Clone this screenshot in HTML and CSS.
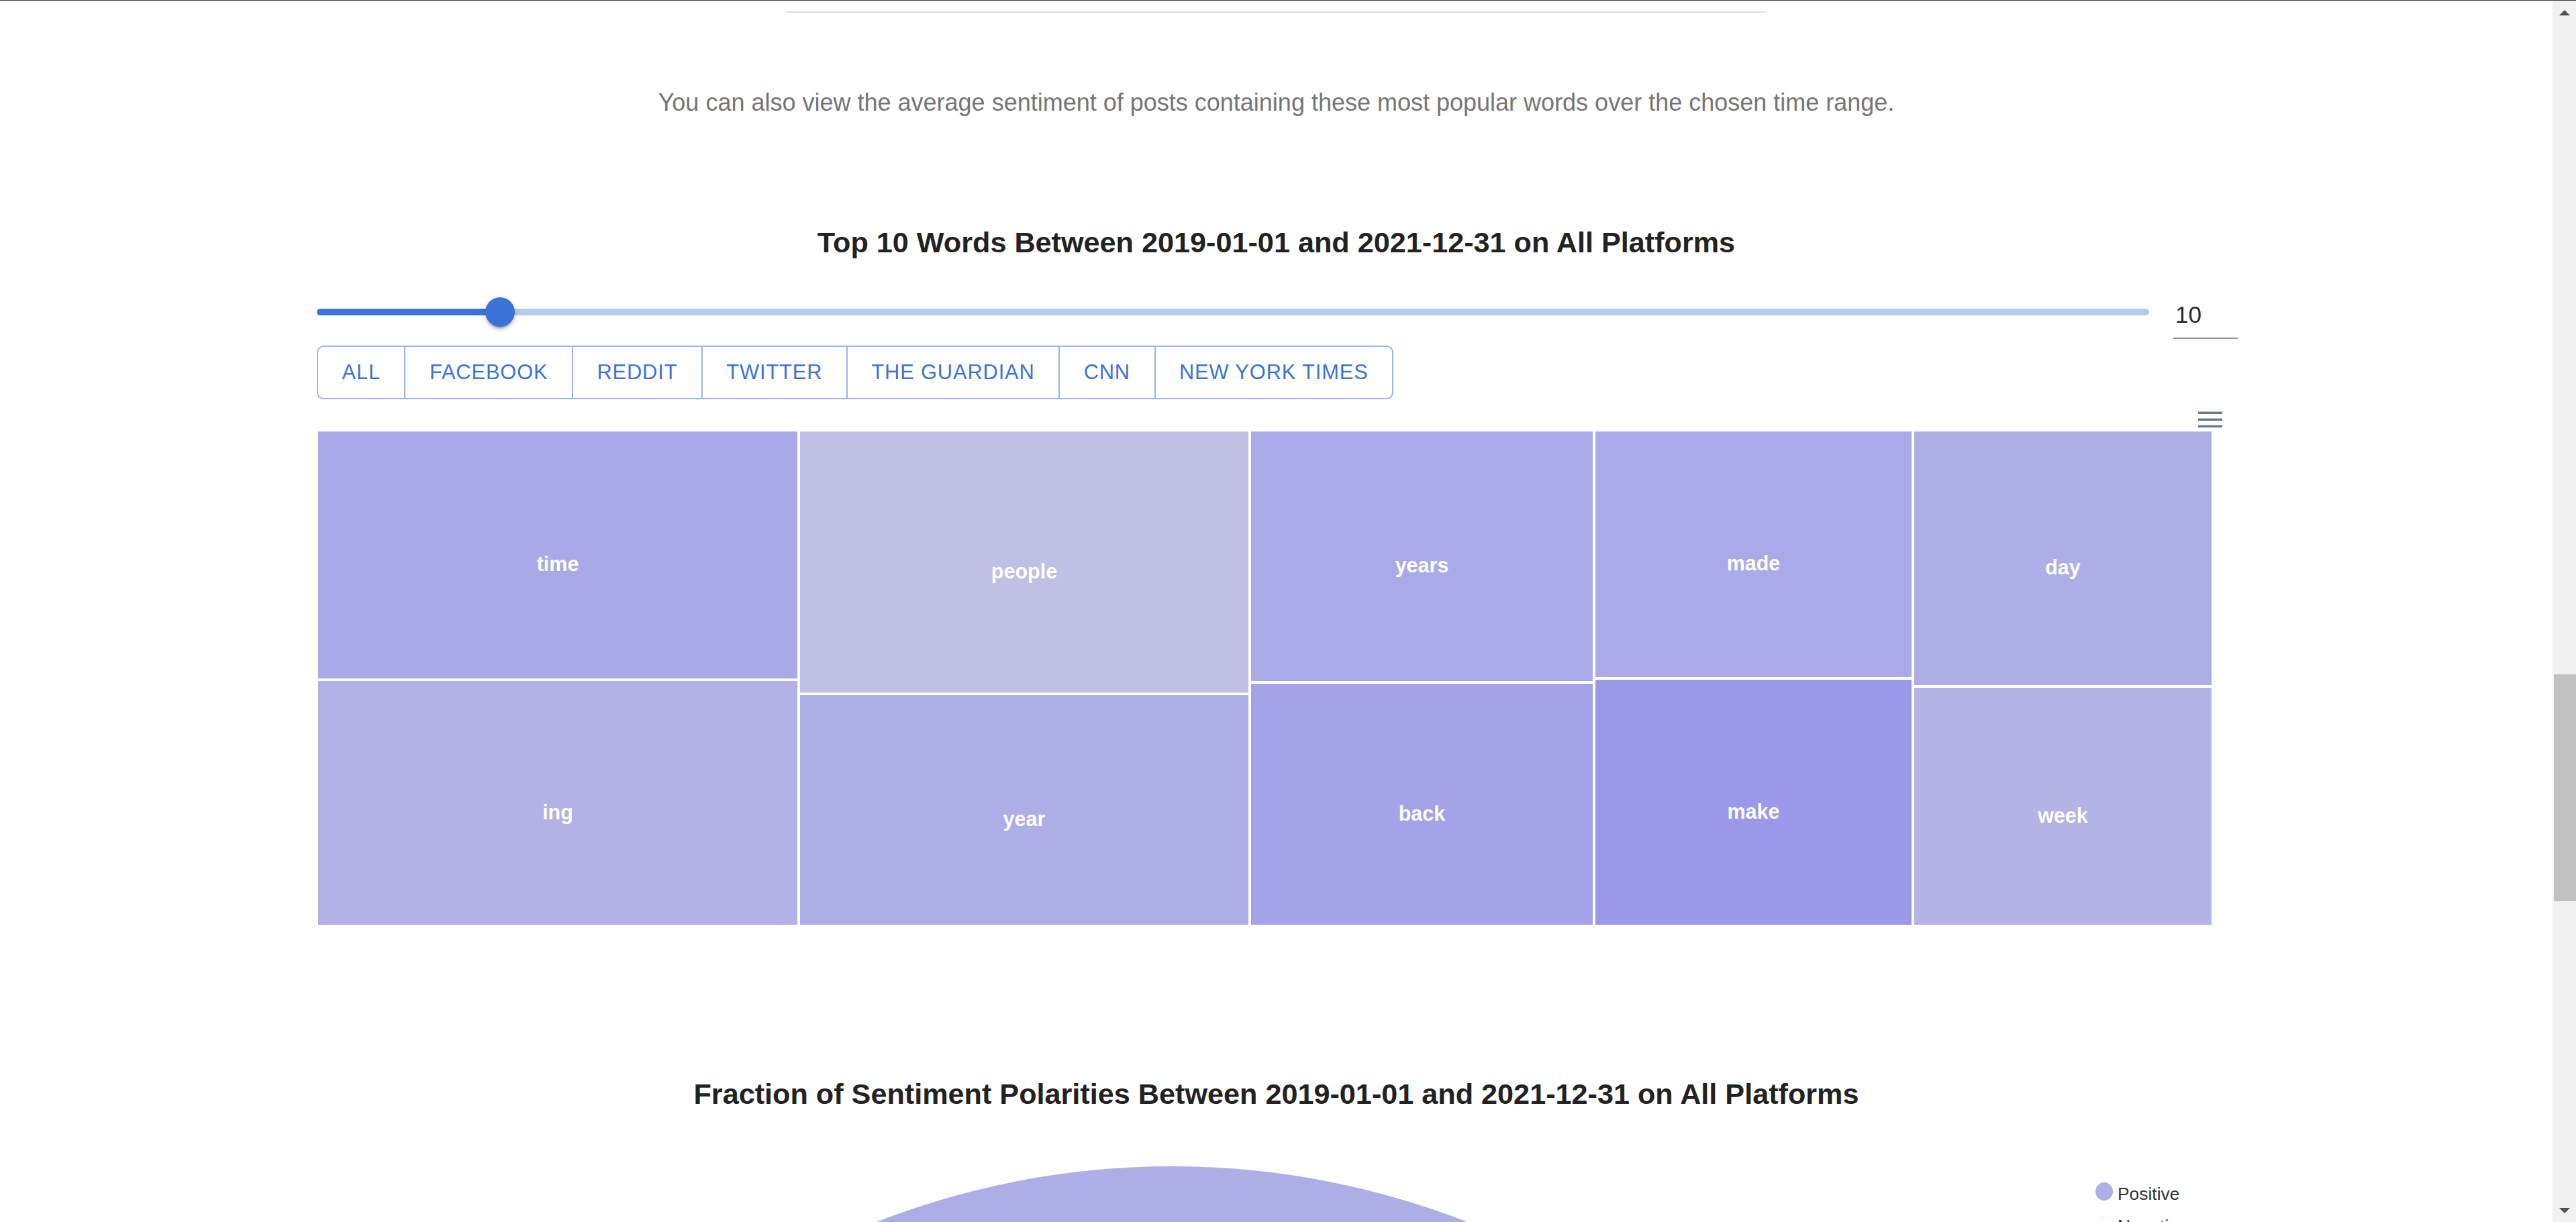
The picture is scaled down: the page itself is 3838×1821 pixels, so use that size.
FILE: index.html
```html
<!DOCTYPE html>
<html lang="en">
<head>
<meta charset="utf-8">
<title>Top Words</title>
<link rel="stylesheet" href="styles.css">
</head>
<body>
<div class="topline"></div>
<div class="viewport">
  <main class="page">
    <div class="divider"></div>
    <p class="intro">You can also view the average sentiment of posts containing these most popular words over the chosen time range.</p>
    <div class="container">
      <h2 class="chart-title">Top 10 Words Between 2019-01-01 and 2021-12-31 on All Platforms</h2>
      <div class="slider-row">
        <div class="slider">
          <div class="track-active" style="width:10%"></div>
          <div class="thumb"></div>
          <div class="rail"></div>
        </div>
        <div class="num-input"><span class="num-value">10</span></div>
      </div>
      <div class="btn-group">
        <button class="btn">All</button>
        <button class="btn">Facebook</button>
        <button class="btn">Reddit</button>
        <button class="btn">Twitter</button>
        <button class="btn">The Guardian</button>
        <button class="btn">CNN</button>
        <button class="btn">New York Times</button>
      </div>
      <div class="chart-tools">
        <svg class="menu-icon" width="36" height="24" viewBox="0 0 36 24">
          <rect x="0" y="0.5" width="36" height="3.5" fill="#6e7a8a"/>
          <rect x="0" y="10.5" width="36" height="3.5" fill="#6e7a8a"/>
          <rect x="0" y="20.5" width="36" height="3.5" fill="#6e7a8a"/>
        </svg>
      </div>
      <div class="treemap">
        <div class="tm-col" style="flex-basis:718px">
          <div class="tm-cell" style="height:372px;background:#a9a9e8">time</div>
          <div class="tm-cell tm-fill" style="background:#b2b2e6">ing</div>
        </div>
        <div class="tm-col" style="flex-basis:672px">
          <div class="tm-cell" style="height:393px;background:#c0c0e4">people</div>
          <div class="tm-cell tm-fill" style="background:#aeaee6">year</div>
        </div>
        <div class="tm-col" style="flex-basis:513px">
          <div class="tm-cell" style="height:376px;background:#aaaae8">years</div>
          <div class="tm-cell tm-fill" style="background:#a4a3e9">back</div>
        </div>
        <div class="tm-col" style="flex-basis:475px">
          <div class="tm-cell" style="height:370px;background:#aaaae8">made</div>
          <div class="tm-cell tm-fill" style="background:#9b99e9">make</div>
        </div>
        <div class="tm-col" style="flex-basis:447px">
          <div class="tm-cell" style="height:382px;background:#aeaee6">day</div>
          <div class="tm-cell tm-fill" style="background:#b3b3e6">week</div>
        </div>
      </div>
      <h2 class="chart-title second">Fraction of Sentiment Polarities Between 2019-01-01 and 2021-12-31 on All Platforms</h2>
      <div class="pie-row">
        <div class="pie"></div>
        <ul class="legend">
          <li class="legend-item"><span class="dot dot-pos"></span><span class="legend-text">Positive</span></li>
          <li class="legend-item"><span class="dot dot-neg"></span><span class="legend-text">Negative</span></li>
        </ul>
      </div>
    </div>
  </main>
  <div class="scrollbar">
    <div class="sb-btn"><span class="arrow-up"></span></div>
    <div class="sb-track"><div class="sb-thumb"></div></div>
    <div class="sb-btn"><span class="arrow-down"></span></div>
  </div>
</div>
</body>
</html>
```

FILE: styles.css
```css
html, body {
  margin: 0;
  padding: 0;
}

body {
  width: 3838px;
  height: 1821px;
  overflow: hidden;
  background: #ffffff;
  font-family: "Liberation Sans", Arial, Helvetica, sans-serif;
  display: flex;
  flex-direction: column;
}

.topline {
  height: 1px;
  background: #3a3a3a;
  flex: none;
}

.viewport {
  flex: 1;
  display: flex;
  min-height: 0;
}

.page {
  flex: 1;
  display: flex;
  flex-direction: column;
  overflow: hidden;
  min-width: 0;
}

.divider {
  align-self: center;
  width: 1459px;
  height: 2px;
  margin-top: 16px;
  background: #dedede;
  flex: none;
}

.intro {
  margin: 107px 0 0;
  text-align: center;
  font-size: 36px;
  line-height: 54px;
  color: #757575;
}

.container {
  width: 2862px;
  margin-left: 472px;
  display: flex;
  flex-direction: column;
  flex: none;
}

.chart-title {
  margin: 156px 0 0;
  text-align: center;
  font-size: 43.2px;
  line-height: 51.8px;
  font-weight: 700;
  color: #222222;
  margin-left: -472px;
  margin-right: -469px;
}

.chart-title.second {
  margin-top: 225px;
}

/* slider */
.slider-row {
  margin-top: 55px;
  display: flex;
  align-items: flex-start;
  gap: 36px;
}

.slider {
  width: 2730px;
  height: 44px;
  flex: none;
  display: flex;
  align-items: center;
}

.track-active {
  height: 10px;
  background: #3b73d6;
  border-radius: 5px 0 0 5px;
  flex: none;
}

.thumb {
  width: 44px;
  height: 44px;
  margin: 0 -22px;
  border-radius: 50%;
  background: #3b73d6;
  position: relative;
  z-index: 1;
  flex: none;
  box-shadow: 0 6px 2px -4px rgba(0,0,0,0.2), 0 4px 4px 0 rgba(0,0,0,0.14), 0 2px 11px 0 rgba(0,0,0,0.12);
}

.rail {
  flex: 1;
  height: 10px;
  background: #b6c9f0;
  border-radius: 0 5px 5px 0;
}

.num-input {
  width: 96px;
  margin-top: 4px;
  padding-bottom: 12px;
  border-bottom: 2px solid #949494;
  flex: none;
}

.num-value {
  display: block;
  padding-left: 3px;
  font-size: 35.2px;
  line-height: 44px;
  color: rgba(0,0,0,0.87);
}

/* button group */
.btn-group {
  margin-top: 10px;
  display: flex;
  align-self: flex-start;
}

.btn {
  font-family: "Liberation Sans", Arial, Helvetica, sans-serif;
  font-size: 30.8px;
  line-height: 53.9px;
  letter-spacing: 0.88px;
  text-transform: uppercase;
  color: #3b73d6;
  background: #ffffff;
  border: 2px solid #98b6eb;
  padding: 11px 35.5px;
  margin: 0;
  border-radius: 0;
}

.btn + .btn {
  margin-left: -2px;
}

.btn:first-child {
  border-radius: 10px 0 0 10px;
}

.btn:last-child {
  border-radius: 0 10px 10px 0;
}

/* chart tools */
.chart-tools {
  margin-top: 18px;
  display: flex;
  justify-content: flex-end;
  padding-right: 23px;
  height: 24px;
}

.menu-icon {
  display: block;
}

/* treemap */
.treemap {
  margin-top: 4px;
  width: 2825px;
  height: 739px;
  display: flex;
}

.tm-col {
  display: flex;
  flex-direction: column;
  flex-grow: 0;
  flex-shrink: 0;
}

.tm-cell {
  box-sizing: border-box;
  border: 2px solid #ffffff;
  padding-top: 27px;
  display: flex;
  align-items: center;
  justify-content: center;
  color: #ffffff;
  font-weight: 700;
  font-size: 30.5px;
  line-height: 36px;
  flex: none;
}

.tm-fill {
  flex: 1;
}

/* pie */
.pie-row {
  margin-top: 81px;
  display: flex;
  align-items: flex-start;
}

.pie {
  width: 2416px;
  height: 2416px;
  margin-left: 66px;
  border-radius: 50%;
  background: #aeaee6;
  flex: none;
}

.legend {
  list-style: none;
  margin: 24px 0 0 168px;
  padding: 0;
  display: flex;
  flex-direction: column;
  gap: 16px;
}

.legend-item {
  display: flex;
  align-items: flex-start;
  gap: 7px;
}

.dot {
  width: 26px;
  height: 27px;
  border-radius: 50%;
  flex: none;
}

.dot-pos {
  background: #aeaee6;
}

.dot-neg {
  background: #fbfbfd;
}

.legend-text {
  margin-top: 2px;
  font-size: 26.4px;
  line-height: 30px;
  color: #333333;
}

/* fake scrollbar */
.scrollbar {
  width: 35px;
  flex: none;
  background: #f1f1f1;
  display: flex;
  flex-direction: column;
}

.sb-btn {
  height: 35px;
  flex: none;
  display: flex;
  align-items: center;
  justify-content: center;
}

.arrow-up {
  width: 0;
  height: 0;
  border-left: 8px solid transparent;
  border-right: 8px solid transparent;
  border-bottom: 8px solid #505050;
}

.arrow-down {
  width: 0;
  height: 0;
  border-left: 8px solid transparent;
  border-right: 8px solid transparent;
  border-top: 8px solid #505050;
}

.sb-track {
  flex: 1;
}

.sb-thumb {
  margin-top: 969px;
  margin-left: 2px;
  height: 338px;
  background: #c1c1c1;
}
```
